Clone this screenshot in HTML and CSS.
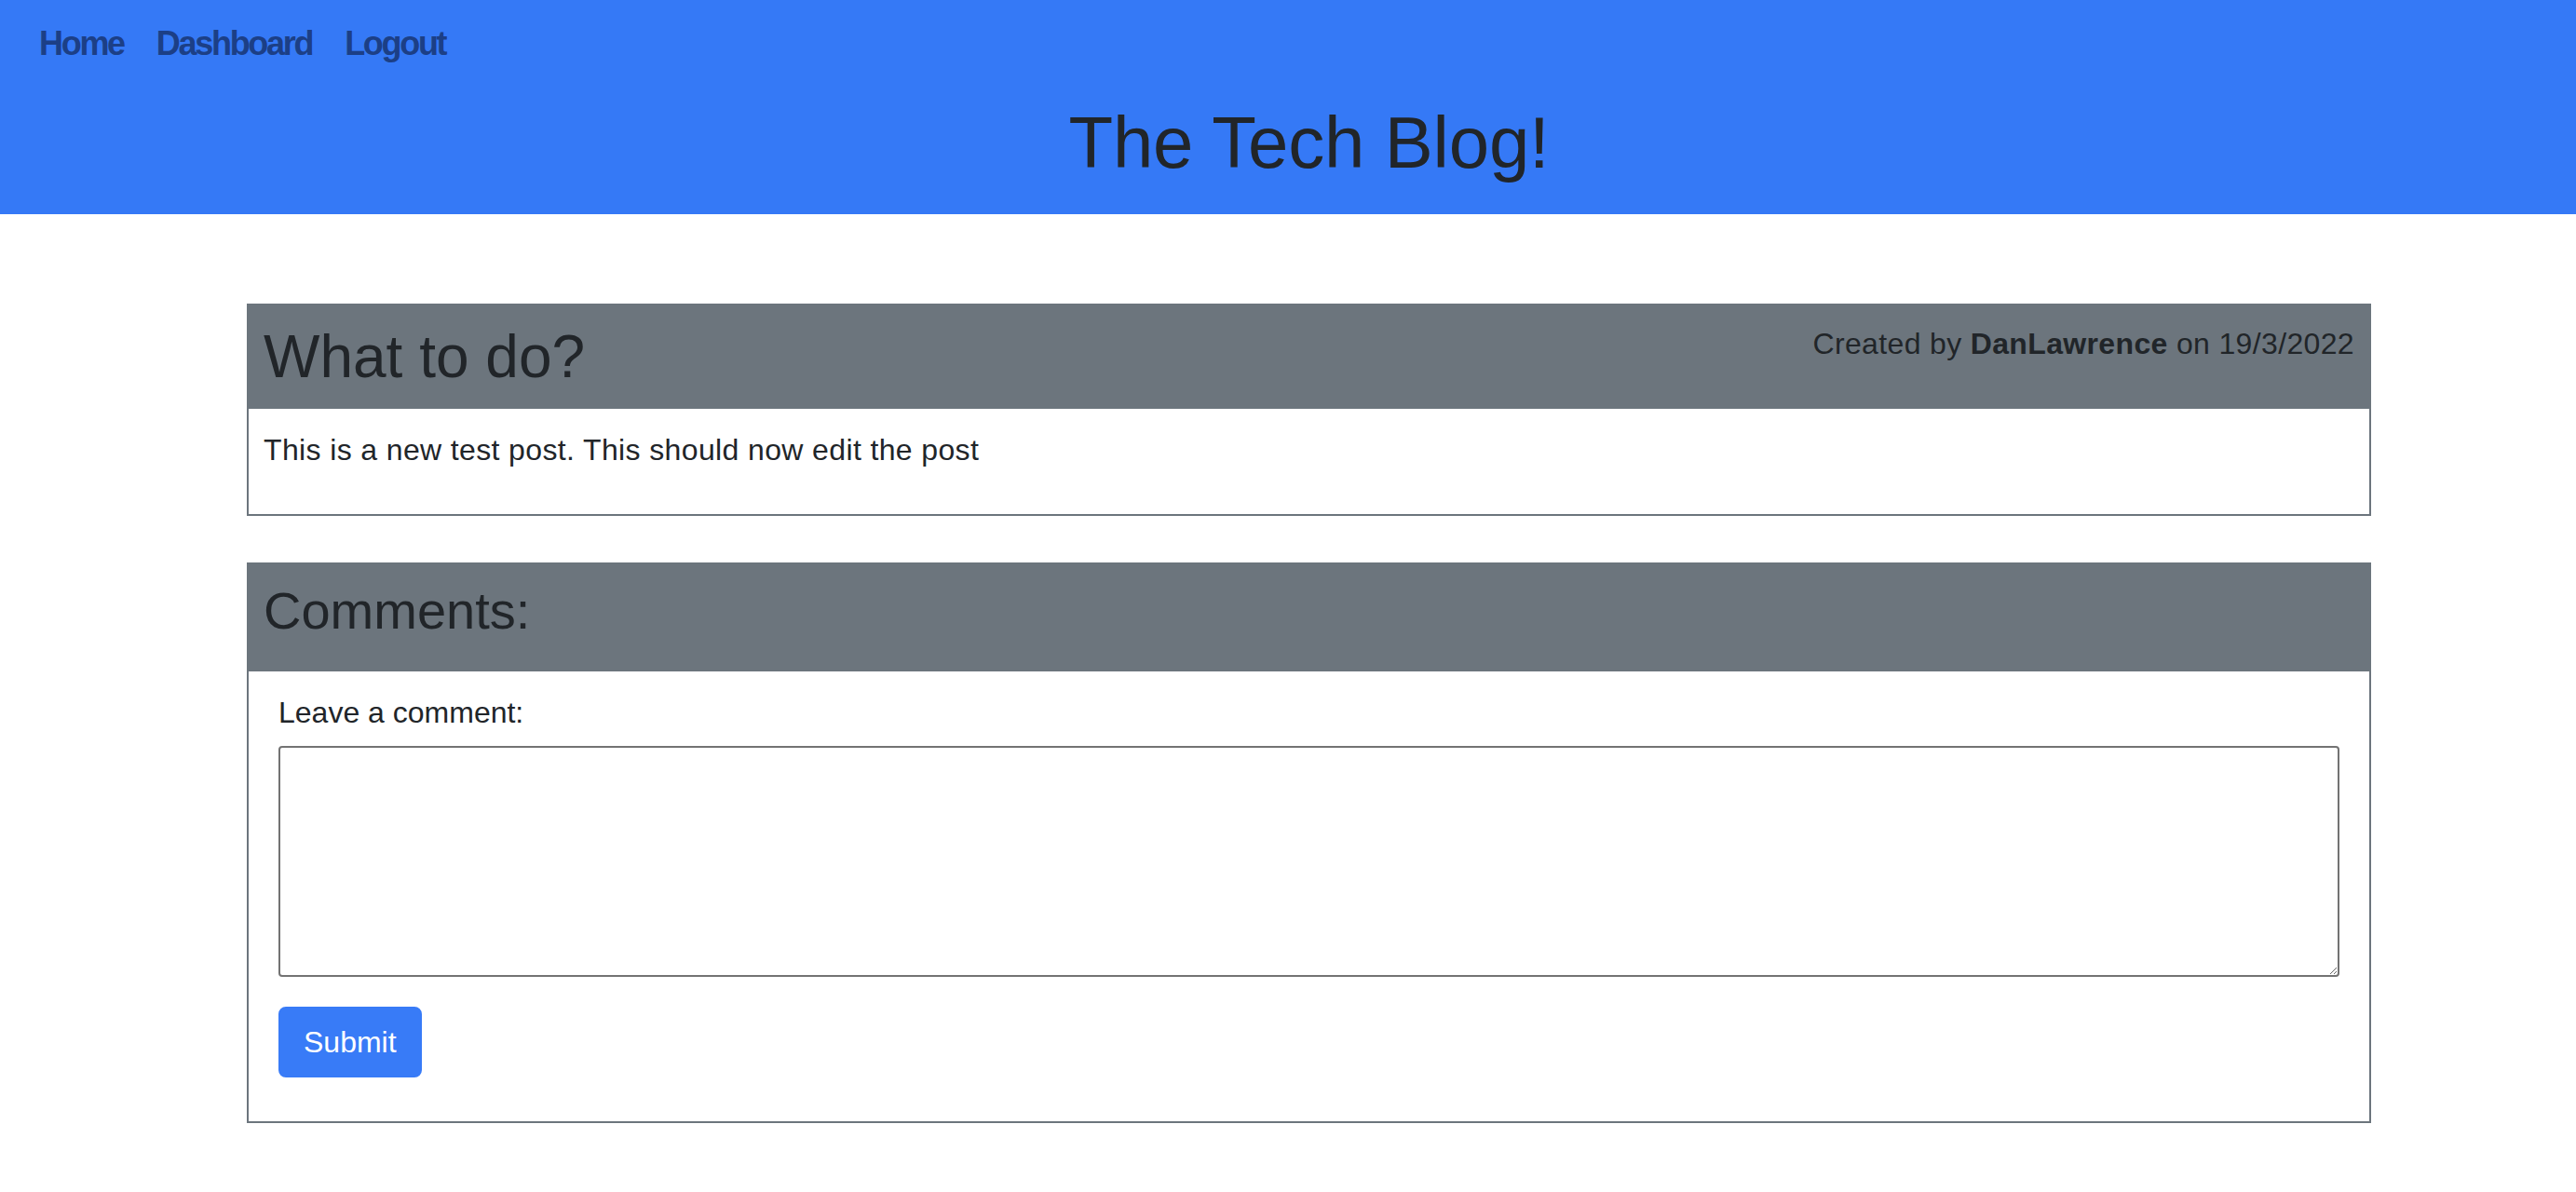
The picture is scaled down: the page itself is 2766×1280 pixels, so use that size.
FILE: index.html
```html
<!DOCTYPE html>
<html lang="en">
<head>
<meta charset="utf-8">
<title>The Tech Blog!</title>
<link rel="stylesheet" href="styles.css">
</head>
<body>
<header class="site-header">
  <nav class="nav">
    <a class="nav-link" href="#">Home</a>
    <a class="nav-link" href="#">Dashboard</a>
    <a class="nav-link" href="#">Logout</a>
  </nav>
  <div class="page">
    <h1 class="site-title">The Tech Blog!</h1>
  </div>
</header>
<main class="page">
  <section class="card post-card">
    <div class="card-header post-header">
      <h2 class="post-title">What to do?</h2>
      <p class="post-meta">Created by <strong>DanLawrence</strong> on 19/3/2022</p>
    </div>
    <div class="card-body post-body">
      <p class="post-text">This is a new test post. This should now edit the post</p>
    </div>
  </section>
  <section class="card comments-card">
    <div class="card-header comments-header">
      <h3 class="comments-title">Comments:</h3>
    </div>
    <form class="card-body comment-form">
      <label class="comment-label" for="comment">Leave a comment:</label>
      <textarea class="comment-input" id="comment"></textarea>
      <button class="btn-submit" type="button">Submit</button>
    </form>
  </section>
</main>
</body>
</html>
```

FILE: styles.css
```css
html, body {
  margin: 0;
  padding: 0;
}
body {
  font-family: "Liberation Sans", Arial, sans-serif;
  color: #212529;
  background: #ffffff;
  font-size: 32px;
  line-height: 1.5;
}
.site-header {
  background: #3579f6;
  padding: 20px 0 30px;
}
.nav {
  display: flex;
  gap: 35px;
  padding-left: 42px;
}
.nav-link {
  font-size: 36px;
  line-height: 54px;
  font-weight: 700;
  letter-spacing: -2.3px;
  color: #1c3f86;
  text-decoration: none;
}
.page {
  margin: 0 220px 0 265px;
}
.site-title {
  margin: 32px 0 0;
  text-align: center;
  font-size: 78px;
  line-height: 94px;
  font-weight: 400;
  letter-spacing: -0.2px;
  color: #212529;
}
main.page {
  padding-top: 96px;
  padding-bottom: 40px;
}
.card {
  border: 2px solid #6c757d;
  background: #ffffff;
}
.comments-card {
  margin-top: 50px;
}
.card-header {
  background: #6c757d;
}
.post-header {
  display: flex;
  justify-content: space-between;
  align-items: flex-start;
  padding: 17px 16px 17px 16px;
}
.post-title {
  margin: 0;
  font-size: 64px;
  line-height: 77px;
  font-weight: 400;
  letter-spacing: 0;
}
.post-meta {
  margin: 0;
  font-size: 32px;
  line-height: 48px;
  letter-spacing: 0.35px;
}
.post-meta strong {
  font-weight: 700;
}
.post-body {
  padding: 20px 16px 17px 16px;
}
.post-text {
  margin: 0 0 28px;
  letter-spacing: 0.37px;
}
.comments-header {
  padding: 16px 16px 32px 16px;
}
.comments-title {
  margin: 0;
  font-size: 56px;
  line-height: 67px;
  font-weight: 400;
}
.comment-form {
  display: flex;
  flex-direction: column;
  align-items: flex-start;
  padding: 20px 32px 47px 32px;
}
.comment-label {
  display: block;
  line-height: 48px;
  margin-bottom: 12px;
}
.comment-input {
  box-sizing: border-box;
  width: 100%;
  height: 248px;
  border: 2px solid #737373;
  border-radius: 4px;
  margin: 0;
  padding: 8px;
  font-family: "Liberation Sans", Arial, sans-serif;
  font-size: 32px;
  background: #ffffff;
  resize: both;
}
.btn-submit {
  margin-top: 32px;
  box-sizing: border-box;
  height: 76px;
  padding: 12px 25px;
  border: 2px solid #387bf7;
  border-radius: 8px;
  background: #387bf7;
  color: #ffffff;
  font-family: "Liberation Sans", Arial, sans-serif;
  font-size: 32px;
  line-height: 48px;
}
```
